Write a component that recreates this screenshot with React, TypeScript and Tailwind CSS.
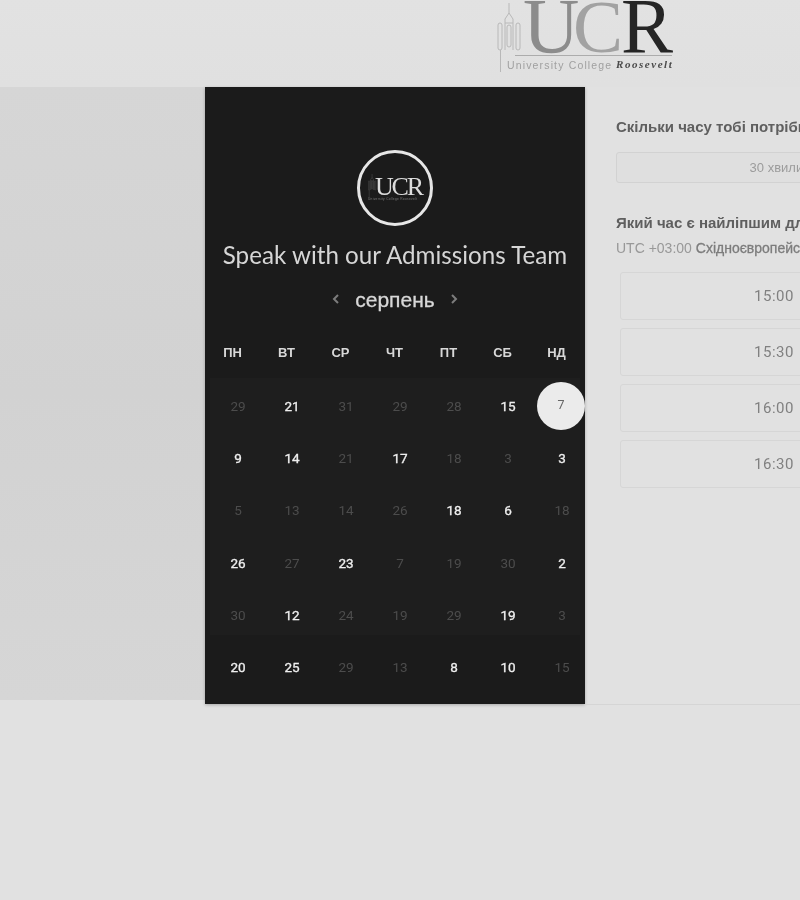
const days = [
  [["29", 0], ["21", 1], ["31", 0], ["29", 0], ["28", 0], ["15", 1], ["7", 2]],
  [["9", 1], ["14", 1], ["21", 0], ["17", 1], ["18", 0], ["3", 0], ["3", 1]],
  [["5", 0], ["13", 0], ["14", 0], ["26", 0], ["18", 1], ["6", 1], ["18", 0]],
  [["26", 1], ["27", 0], ["23", 1], ["7", 0], ["19", 0], ["30", 0], ["2", 1]],
  [["30", 0], ["12", 1], ["24", 0], ["19", 0], ["29", 0], ["19", 1], ["3", 0]],
  [["20", 1], ["25", 1], ["29", 0], ["13", 0], ["8", 1], ["10", 1], ["15", 0]],
] as [string, number][][]

const weekdays = ["ПН", "ВТ", "СР", "ЧТ", "ПТ", "СБ", "НД"]
const times = ["15:00", "15:30", "16:00", "16:30"]

function Tower({ color }: { color: string }) {
  return (
    <g fill="none" stroke={color} strokeWidth="1">
      <path d="M12 3V13M12 13l-4 6v4h8v-4zM8 23v27M16 23v27" />
      <rect x="1" y="23" width="4" height="27" rx="2" />
      <rect x="19" y="23" width="4" height="27" rx="2" />
      <rect x="10" y="25" width="4" height="22" rx="2" />
      <path d="M3.500 50V72" />
    </g>
  )
}

function HeaderLogo() {
  return (
    <svg width="182" height="78" viewBox="0 0 182 78" className="block">
      <Tower color="#b8b8b8" />
      <path d="M18 55.500H175" stroke="#acacac" strokeWidth="1" />
      <text x="26" y="52" fontFamily="Liberation Serif" fontSize="78" fill="#8c8c8c">U</text>
      <text x="76" y="52" fontFamily="Liberation Serif" fontSize="75" fill="#a2a2a2">C</text>
      <text x="124" y="52" fontFamily="Liberation Serif" fontSize="78" fill="#252525">R</text>
      <text x="10" y="69" fontFamily="Liberation Sans" fontSize="10.500" letterSpacing="1.150" fill="#a0a0a0">University College</text>
      <text x="119" y="68" fontFamily="Liberation Serif" fontSize="11" fontWeight="700" fontStyle="italic" letterSpacing="1.550" fill="#4a4a4a">Roosevelt</text>
    </svg>
  )
}

function BadgeLogo() {
  return (
    <svg width="70" height="70" viewBox="0 0 70 70" className="block">
      <g transform="translate(8 20) scale(0.34)" opacity="0.6">
        <Tower color="#a0a0a0" />
      </g>
      <text x="15" y="42" fontFamily="Liberation Serif" fontSize="26" letterSpacing="-2.200" fill="#dcdcdc">UCR</text>
      <text x="8" y="47" fontFamily="Liberation Sans" fontSize="3.200" letterSpacing="0.300" fill="#7a7a7a">University College Roosevelt</text>
    </svg>
  )
}

function Chevron({ d }: { d: string }) {
  return (
    <svg width="8" height="10" viewBox="0 0 8 10" className="block mb-[3px]">
      <path d={d} fill="none" stroke="#7c7c7c" strokeWidth="2" />
    </svg>
  )
}

export default function App() {
  return (
    <div className="w-[800px] h-[900px] overflow-hidden bg-[#e1e1e1] font-['Liberation_Sans',sans-serif] blur-[0.4px]">
      <header className="h-[87px] pl-[497px] bg-gradient-to-b from-[#e2e2e2] to-[#e0e0e0]">
        <HeaderLogo />
      </header>

      <main className="flex items-start">
        <div className="w-[205px] h-[613px] shrink-0 bg-gradient-to-b from-[#d6d6d6] via-[#d2d2d2] to-[#d6d6d6]" />

        <section className="w-[380px] h-[617px] shrink-0 bg-[#1b1b1b] pt-[63px] flex flex-col items-center shadow-[0_1px_3px_rgba(0,0,0,0.25)]">
          <div className="w-[76px] h-[76px] rounded-full border-[3px] border-[#e6e6e6] flex items-center justify-center">
            <BadgeLogo />
          </div>
          <h1 className="mt-[12px] h-[34px] leading-[34px] text-[24.200px] text-[#d6d6d6] font-['Lato',sans-serif] whitespace-nowrap">
            Speak with our Admissions Team
          </h1>
          <div className="mt-[16px] h-[24px] flex items-center gap-[15px]">
            <Chevron d="M6 1 2 5l4 4" />
            <span className="text-[21px] leading-[24px] text-[#d8d8d8] [-webkit-text-stroke:0.3px_#d8d8d8]">серпень</span>
            <Chevron d="M2 1l4 4-4 4" />
          </div>
          <div className="mt-[32px] w-full grid grid-cols-[repeat(7,54px)] h-[18px] items-center">
            {weekdays.map((d) => (
              <span key={d} className="text-center text-[13px] font-bold leading-[18px] text-[#d8d8d8] pl-[1px]">
                {d}
              </span>
            ))}
          </div>
          <div className="mt-[18px] w-full relative pl-[6px] grid grid-cols-[repeat(7,54px)] grid-rows-[repeat(6,52.2px)] font-['Roboto',sans-serif] text-[13.500px]">
            <div className="absolute left-[5px] right-[5px] -top-[2px] h-[257px] bg-[#1e1e1e]" />
            {days.flat().map(([value, state], i) =>
              state === 2 ? (
                <div key={i} className="relative -left-[1px] flex items-center justify-center">
                  <span className="w-[48px] h-[48px] rounded-full bg-[#ebebeb] text-[#666] text-[12.500px] flex items-center justify-center pb-[2px]">
                    {value}
                  </span>
                </div>
              ) : (
                <span
                  key={i}
                  className={
                    state === 1
                      ? "relative flex items-center justify-center text-[#efefef] [-webkit-text-stroke:0.3px_#efefef]"
                      : "relative flex items-center justify-center text-[#4c4c4c]"
                  }
                >
                  {value}
                </span>
              ),
            )}
          </div>
        </section>

        <section className="flex-1 min-w-0 h-[618px] pl-[31px] pt-[31px] border-b border-[#d5d5d5] text-[#5f5f5f]">
          <h2 className="h-[18px] leading-[18px] text-[15px] font-bold whitespace-nowrap">
            Скільки часу тобі потрібно?
          </h2>
          <div className="mt-[16px] w-[328px] h-[31px] rounded-[3px] border border-[#d2d2d2] bg-[#dfdfdf] flex items-center justify-center text-[13px] text-[#9c9c9c]">
            30 хвилин
          </div>
          <h2 className="mt-[31px] h-[18px] leading-[18px] text-[15px] font-bold whitespace-nowrap">
            Який час є найліпшим для тебе?
          </h2>
          <p className="mt-[7px] h-[18px] leading-[18px] text-[14px] whitespace-nowrap text-[#989898]">
            UTC +03:00 <span className="text-[#7c7c7c] [-webkit-text-stroke:0.3px_#7c7c7c]">Східноєвропейський літній час</span>
          </p>
          <div className="mt-[15px] ml-[4px] flex flex-col gap-[8px]">
            {times.map((t) => (
              <div
                key={t}
                className="w-[308px] h-[48px] rounded-[3px] border border-[#d6d6d6] flex items-center justify-center text-[15px] tracking-[0.5px] text-[#808080] font-['Roboto',sans-serif]"
              >
                {t}
              </div>
            ))}
          </div>
        </section>
      </main>
    </div>
  )
}
